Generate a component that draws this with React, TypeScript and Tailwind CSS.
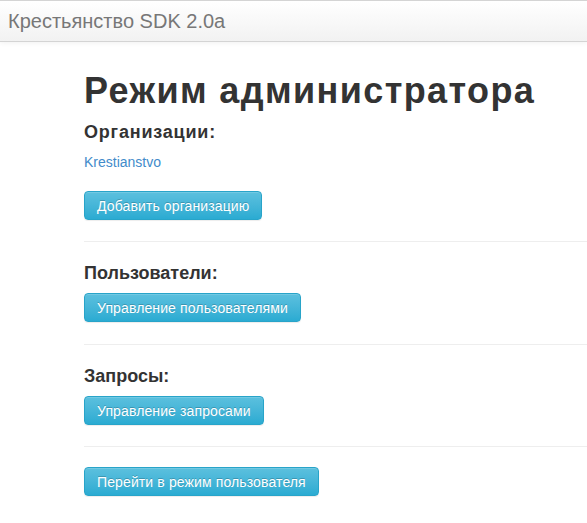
import React from "react";

const font = { fontFamily: '"Liberation Sans", Arial, sans-serif' };

function InfoButton({ children }: { children: React.ReactNode }) {
  return (
    <button
      type="button"
      className="h-[29px] rounded-[4px] border border-[#28a4c9] bg-gradient-to-b from-[#5bc0de] to-[#2aabd2] px-[12px] text-[14px] leading-none tracking-[0.12px] text-white shadow-[inset_0_1px_0_rgba(255,255,255,0.15),0_1px_1px_rgba(0,0,0,0.075)] [text-shadow:0_-1px_0_rgba(0,0,0,0.2)]"
    >
      {children}
    </button>
  );
}

export default function App() {
  return (
    <div className="min-h-[523px] bg-white text-[#333]" style={font}>
      <nav className="h-[42px] border-y border-[#d4d4d4] bg-gradient-to-b from-white to-[#f2f2f2] flex items-center px-[8px] shadow-[0_1px_5px_rgba(0,0,0,0.06)]">
        <span className="text-[20px] text-[#777]">Крестьянство SDK 2.0a</span>
      </nav>

      <div className="pl-[84px]">
        <h1 className="mt-[29px] text-[36px] font-bold leading-[40px] tracking-[1.4px] text-[#333]">
          Режим администратора
        </h1>

        <h4 className="mt-[11px] text-[18px] font-bold leading-[20px] tracking-[0.8px]">
          Организации:
        </h4>
        <div className="mt-[10px] text-[14px] leading-[20px]">
          <a className="text-[#428bca]" href="#">
            Krestianstvo
          </a>
        </div>
        <div className="mt-[19px]">
          <InfoButton>Добавить организацию</InfoButton>
        </div>

        <hr className="mt-[21px] border-t border-[#eee]" />

        <h4 className="mt-[21px] text-[18px] font-bold leading-[20px]">Пользователи:</h4>
        <div className="mt-[10px]">
          <InfoButton>Управление пользователями</InfoButton>
        </div>

        <hr className="mt-[22px] border-t border-[#eee]" />

        <h4 className="mt-[21px] text-[18px] font-bold leading-[20px]">Запросы:</h4>
        <div className="mt-[10px]">
          <InfoButton>Управление запросами</InfoButton>
        </div>

        <hr className="mt-[21px] border-t border-[#eee]" />

        <div className="mt-[20px]">
          <InfoButton>Перейти в режим пользователя</InfoButton>
        </div>
      </div>
    </div>
  );
}
